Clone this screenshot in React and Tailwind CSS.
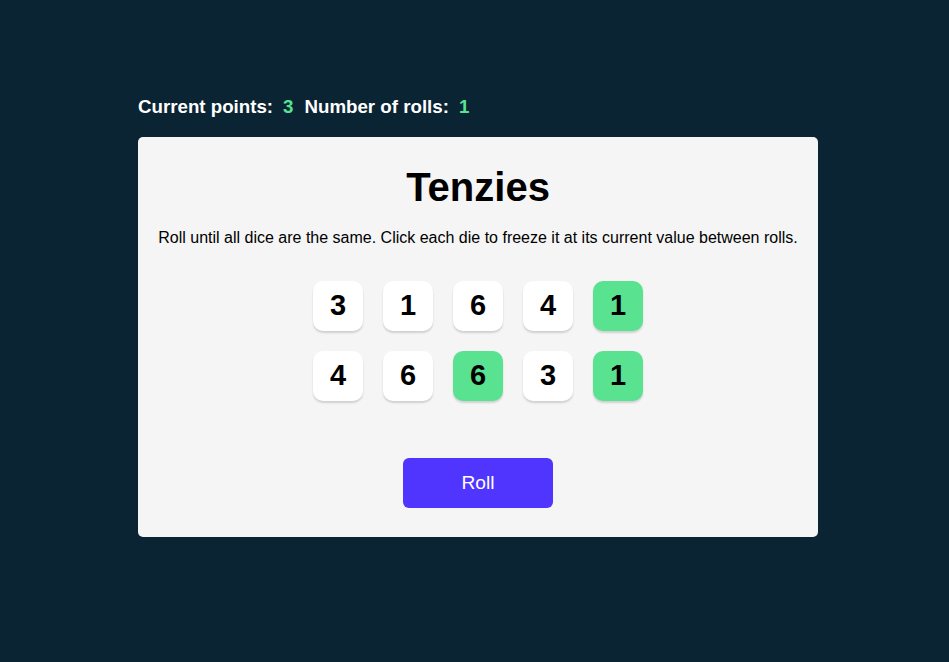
import { useState } from 'react';

const startDice = [
  { value: 3, held: false },
  { value: 1, held: false },
  { value: 6, held: false },
  { value: 4, held: false },
  { value: 1, held: true },
  { value: 4, held: false },
  { value: 6, held: false },
  { value: 6, held: true },
  { value: 3, held: false },
  { value: 1, held: true },
];

const Die = ({ value, held, onClick }) => (
  <button
    onClick={onClick}
    className={`w-[50px] h-[50px] rounded-[10px] flex items-center justify-center text-[29px] font-bold text-black shadow-[0_2px_2px_rgba(0,0,0,0.15)] ${
      held ? 'bg-[#59E391]' : 'bg-white'
    }`}
  >
    {value}
  </button>
);

export default function App() {
  const [dice, setDice] = useState(startDice);
  const [rolls, setRolls] = useState(1);

  const toggle = (i) =>
    setDice((prev) => prev.map((d, idx) => (idx === i ? { ...d, held: !d.held } : d)));

  const roll = () => {
    setDice((prev) =>
      prev.map((d) => (d.held ? d : { ...d, value: Math.ceil(Math.random() * 6) }))
    );
    setRolls((r) => r + 1);
  };

  return (
    <div
      className="min-h-[662px] bg-[#0B2434] pt-[96px] pl-[138px]"
      style={{ fontFamily: '"Liberation Sans", Arial, sans-serif' }}
    >
      {/* Score line */}
      <div className="flex items-center text-[18.72px] leading-[22px] font-bold text-white">
        <span>Current points:</span>
        <span className="ml-[10px] text-[#59E391]">3</span>
        <span className="ml-[11px]">Number of rolls:</span>
        <span className="ml-[10px] text-[#59E391]">{rolls}</span>
      </div>

      {/* Board */}
      <main className="mt-[19px] w-[680px] h-[400px] bg-[#F5F5F5] rounded-[5px] flex flex-col items-center pt-[27px]">
        <h1 className="text-[40px] leading-[46px] font-bold text-black">Tenzies</h1>
        <p className="mt-[19px] text-[16px] leading-[18px] text-black">
          Roll until all dice are the same. Click each die to freeze it at its current value between rolls.
        </p>

        <div className="mt-[34px] grid grid-cols-5 gap-[20px]">
          {dice.map((d, i) => (
            <Die key={i} value={d.value} held={d.held} onClick={() => toggle(i)} />
          ))}
        </div>

        <button
          onClick={roll}
          className="mt-[57px] w-[150px] h-[50px] rounded-[6px] bg-[#5035FF] text-white text-[19.2px]"
        >
          Roll
        </button>
      </main>
    </div>
  );
}
